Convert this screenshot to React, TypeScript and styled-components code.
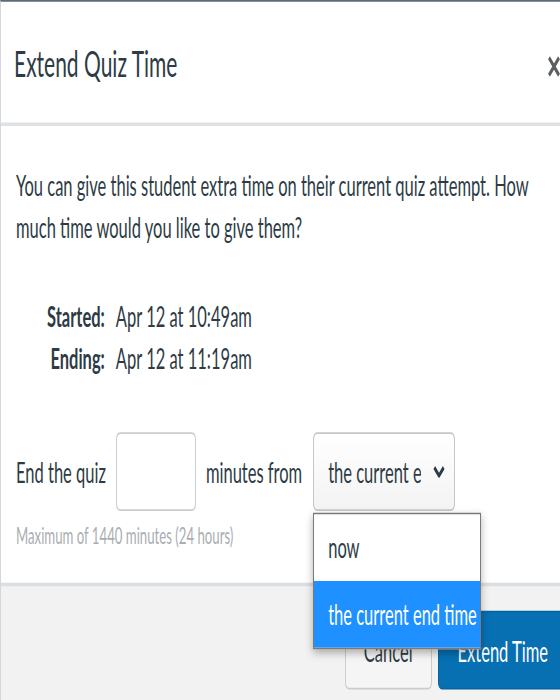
import styled, { createGlobalStyle } from 'styled-components';

// the reference is a vertically stretched capture, so the dialog is laid out
// at its natural size and stretched by the same factor
const STRETCH = 1.75;

const GlobalStyle = createGlobalStyle`
  html {
    overflow: hidden;
    background: #ffffff;
  }
  body {
    margin: 0;
    padding: 0;
    height: 700px;
  }
`;

const Dialog = styled.div`
  width: 580px;
  min-height: 400px;
  display: flex;
  flex-direction: column;
  box-sizing: border-box;
  background: #fff;
  border-top: 1px solid #5f6a72;
  border-left: 1px solid #d5d8da;
  transform: scaleY(${STRETCH});
  transform-origin: 0 0;
  font-family: Lato, 'Noto Sans', sans-serif;
  color: #2d3b45;
`;

const Header = styled.div`
  height: 69px;
  display: flex;
  align-items: center;
  justify-content: space-between;
  padding: 0 19px 0 13px;
  border-bottom: 2px solid #dfe2e4;
`;

const Title = styled.h1`
  margin: 0;
  font-size: 21px;
  font-weight: 400;
  line-height: 1;
`;

const CloseButton = styled.button`
  border: 0;
  background: none;
  padding: 0;
  margin-top: 4px;
  display: flex;
  color: #5b5f62;
`;

const Body = styled.div`
  padding: 22px 14px 18px 15px;
`;

const Lead = styled.p`
  margin: 0;
  font-size: 16.5px;
  line-height: 24px;
`;

const Times = styled.dl`
  margin: 27px 0 0;
  padding-left: 31px;
  display: grid;
  grid-template-columns: auto auto;
  justify-content: start;
  column-gap: 11px;
  font-size: 16.5px;
  line-height: 24px;
`;

const TimeLabel = styled.dt`
  font-weight: 700;
  text-align: right;
`;

const TimeValue = styled.dd`
  margin: 0;
`;

const ExtendRow = styled.div`
  margin-top: 30px;
  display: flex;
  align-items: center;
  gap: 10px;
  font-size: 16.5px;
`;

const MinutesInput = styled.input`
  width: 80px;
  height: 45px;
  box-sizing: border-box;
  border: 1px solid #c7cdd1;
  border-radius: 4px;
  background: #fff;
  font: inherit;
`;

const SelectWrap = styled.div`
  position: relative;
  margin-left: 1px;
`;

const SelectBox = styled.div`
  width: 142px;
  height: 45px;
  box-sizing: border-box;
  display: flex;
  align-items: center;
  justify-content: space-between;
  padding: 0 6px 0 14px;
  border: 1px solid #c4c8cb;
  border-radius: 4px;
  background: linear-gradient(#ffffff, #f3f3f3);
  color: #2d3b45;
`;

const SelectText = styled.span`
  width: 93px;
  overflow: hidden;
  white-space: nowrap;
`;

const Chevron = styled.svg`
  width: 12px;
  height: 7px;
  margin-right: 3px;
`;

const OptionList = styled.ul`
  position: absolute;
  top: 100%;
  left: 0;
  width: 168px;
  margin: 1px 0 0;
  padding: 0;
  list-style: none;
  box-sizing: border-box;
  background: #fff;
  border: 1px solid #7a7a7a;
  box-shadow: 0 2px 6px rgba(0, 0, 0, 0.3);
  z-index: 2;
`;

const OptionItem = styled.li<{ $active?: boolean }>`
  height: 38px;
  display: flex;
  align-items: center;
  padding-left: 14px;
  white-space: nowrap;
  font-size: 16.5px;
  color: ${(p) => (p.$active ? '#ffffff' : '#2d3b45')};
  background: ${(p) => (p.$active ? '#1e90ff' : '#ffffff')};
`;

const Hint = styled.div`
  margin-top: 5px;
  font-size: 13.2px;
  line-height: 18px;
  color: #a9aeb2;
`;

const Footer = styled.div`
  flex: 1;
  display: flex;
  justify-content: flex-end;
  align-items: flex-start;
  gap: 6px;
  padding: 14px 12px 14px 16px;
  background: #f2f2f2;
  border-top: 2px solid #dcdfe1;
`;

const Button = styled.button<{ $primary?: boolean }>`
  height: 45px;
  padding: 0 ${(p) => (p.$primary ? '19px' : '18px')};
  border-radius: 4px;
  font-family: inherit;
  font-size: 16.5px;
  border: 1px solid ${(p) => (p.$primary ? '#0565a3' : '#c7cdd1')};
  background: ${(p) => (p.$primary ? '#0770b3' : '#f5f5f5')};
  color: ${(p) => (p.$primary ? '#ffffff' : '#2d3b45')};
`;

export default function App() {
  return (
    <>
      <GlobalStyle />
      <Dialog>
        <Header>
          <Title>Extend Quiz Time</Title>
          <CloseButton aria-label='Close'>
            <svg width='14' height='12' viewBox='0 0 14 12'>
              <path d='M2 1 L12 11 M12 1 L2 11' stroke='currentColor' strokeWidth='2.6' fill='none' />
            </svg>
          </CloseButton>
        </Header>
        <Body>
          <Lead>
            You can give this student extra time on their current quiz attempt. How much time would
            you like to give them?
          </Lead>
          <Times>
            <TimeLabel>Started:</TimeLabel>
            <TimeValue>Apr 12 at 10:49am</TimeValue>
            <TimeLabel>Ending:</TimeLabel>
            <TimeValue>Apr 12 at 11:19am</TimeValue>
          </Times>
          <ExtendRow>
            <span>End the quiz</span>
            <MinutesInput type='text' aria-label='Minutes' />
            <span>minutes from</span>
            <SelectWrap>
              <SelectBox>
                <SelectText>the current end time</SelectText>
                <Chevron viewBox='0 0 12 7'>
                  <path d='M1.3 1.2 L6 5.8 L10.7 1.2' stroke='#2d3b45' strokeWidth='2.4' fill='none' />
                </Chevron>
              </SelectBox>
              <OptionList>
                <OptionItem>now</OptionItem>
                <OptionItem $active>the current end time</OptionItem>
              </OptionList>
            </SelectWrap>
          </ExtendRow>
          <Hint>Maximum of 1440 minutes (24 hours)</Hint>
        </Body>
        <Footer>
          <Button>Cancel</Button>
          <Button $primary>Extend Time</Button>
        </Footer>
      </Dialog>
    </>
  );
}
